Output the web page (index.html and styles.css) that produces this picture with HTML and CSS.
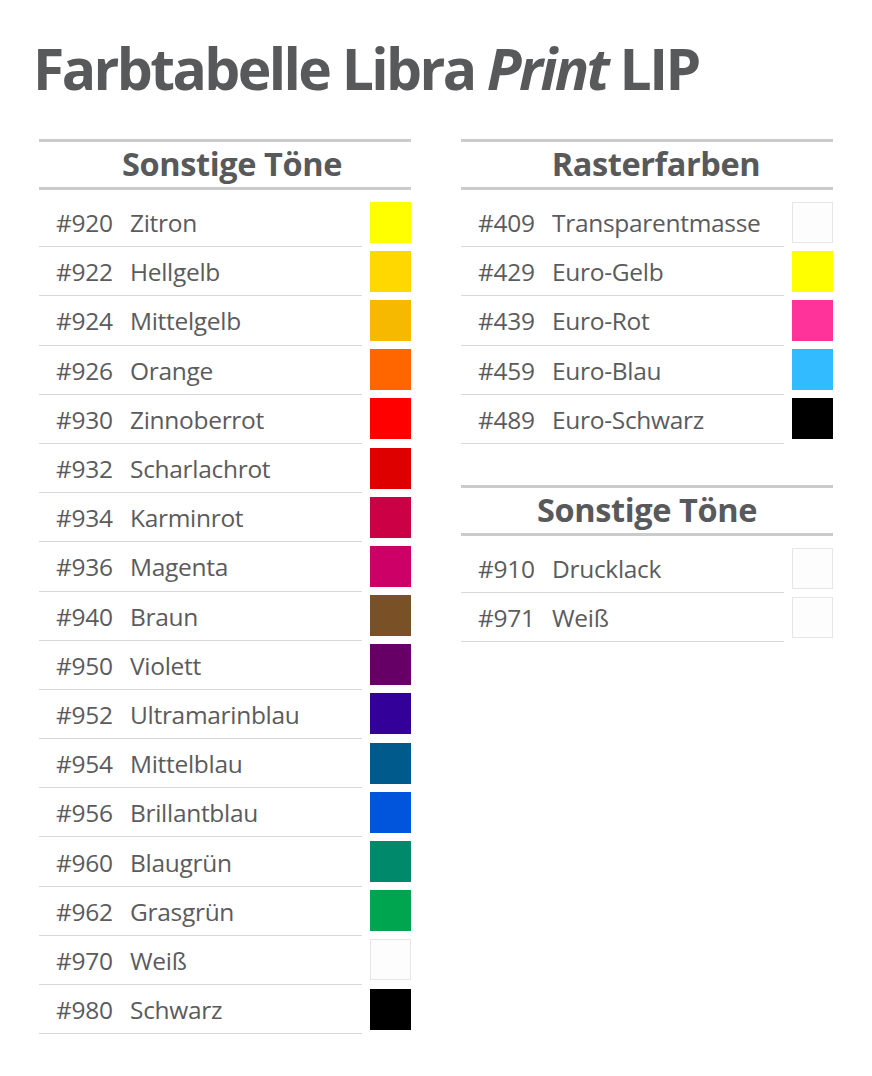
FILE: index.html
```html
<!DOCTYPE html>
<html lang="de">
<head>
<meta charset="utf-8">
<title>Farbtabelle Libra Print LIP</title>
<link rel="stylesheet" href="styles.css">
</head>
<body>
<div class="page">
  <h1 class="title">Farbtabelle Libra <em>Print</em> LIP</h1>
  <div class="columns">
    <div class="col">
      <section class="group">
        <h2 class="group-head head-shift">Sonstige Töne</h2>
        <ul class="rows">
          <li class="row"><span class="label"><span class="code">#920</span><span class="name">Zitron</span></span><span class="swatch c920"></span></li>
          <li class="row"><span class="label"><span class="code">#922</span><span class="name">Hellgelb</span></span><span class="swatch c922"></span></li>
          <li class="row"><span class="label"><span class="code">#924</span><span class="name">Mittelgelb</span></span><span class="swatch c924"></span></li>
          <li class="row"><span class="label"><span class="code">#926</span><span class="name">Orange</span></span><span class="swatch c926"></span></li>
          <li class="row"><span class="label"><span class="code">#930</span><span class="name">Zinnoberrot</span></span><span class="swatch c930"></span></li>
          <li class="row"><span class="label"><span class="code">#932</span><span class="name">Scharlachrot</span></span><span class="swatch c932"></span></li>
          <li class="row"><span class="label"><span class="code">#934</span><span class="name">Karminrot</span></span><span class="swatch c934"></span></li>
          <li class="row"><span class="label"><span class="code">#936</span><span class="name">Magenta</span></span><span class="swatch c936"></span></li>
          <li class="row"><span class="label"><span class="code">#940</span><span class="name">Braun</span></span><span class="swatch c940"></span></li>
          <li class="row"><span class="label"><span class="code">#950</span><span class="name">Violett</span></span><span class="swatch c950"></span></li>
          <li class="row"><span class="label"><span class="code">#952</span><span class="name">Ultramarinblau</span></span><span class="swatch c952"></span></li>
          <li class="row"><span class="label"><span class="code">#954</span><span class="name">Mittelblau</span></span><span class="swatch c954"></span></li>
          <li class="row"><span class="label"><span class="code">#956</span><span class="name">Brillantblau</span></span><span class="swatch c956"></span></li>
          <li class="row"><span class="label"><span class="code">#960</span><span class="name">Blaugrün</span></span><span class="swatch c960"></span></li>
          <li class="row"><span class="label"><span class="code">#962</span><span class="name">Grasgrün</span></span><span class="swatch c962"></span></li>
          <li class="row"><span class="label"><span class="code">#970</span><span class="name">Weiß</span></span><span class="swatch white"></span></li>
          <li class="row"><span class="label"><span class="code">#980</span><span class="name">Schwarz</span></span><span class="swatch black"></span></li>
        </ul>
      </section>
    </div>
    <div class="col">
      <section class="group">
        <h2 class="group-head head-shift-wide">Rasterfarben</h2>
        <ul class="rows">
          <li class="row"><span class="label"><span class="code">#409</span><span class="name">Transparentmasse</span></span><span class="swatch white"></span></li>
          <li class="row"><span class="label"><span class="code">#429</span><span class="name">Euro-Gelb</span></span><span class="swatch c429"></span></li>
          <li class="row"><span class="label"><span class="code">#439</span><span class="name">Euro-Rot</span></span><span class="swatch c439"></span></li>
          <li class="row"><span class="label"><span class="code">#459</span><span class="name">Euro-Blau</span></span><span class="swatch c459"></span></li>
          <li class="row"><span class="label"><span class="code">#489</span><span class="name">Euro-Schwarz</span></span><span class="swatch black"></span></li>
        </ul>
      </section>
      <section class="group group-second">
        <h2 class="group-head">Sonstige Töne</h2>
        <ul class="rows">
          <li class="row"><span class="label"><span class="code">#910</span><span class="name">Drucklack</span></span><span class="swatch white"></span></li>
          <li class="row"><span class="label"><span class="code">#971</span><span class="name">Weiß</span></span><span class="swatch white"></span></li>
        </ul>
      </section>
    </div>
  </div>
</div>
</body>
</html>
```
FILE: styles.css
```css
html, body {
  margin: 0;
  padding: 0;
  background: #ffffff;
}

body {
  font-family: "Open Sans", "Liberation Sans", sans-serif;
  color: #58595b;
}

.page {
  padding: 35px 0 0 33px;
}

.title {
  margin: 0;
  font-size: 57px;
  line-height: 66px;
  font-weight: 700;
  letter-spacing: -2.6px;
  color: #58595b;
}

.title em {
  font-style: italic;
}

.columns {
  display: flex;
  gap: 50px;
  margin-top: 38px;
  padding-left: 6px;
}

.col {
  width: 372px;
  display: flex;
  flex-direction: column;
}

.group-second {
  margin-top: 41px;
}

.group-head {
  margin: 0;
  border-top: 3px solid #cbcbcb;
  border-bottom: 3px solid #cbcbcb;
  height: 45px;
  box-sizing: content-box;
  font-size: 32.5px;
  line-height: 43px;
  font-weight: 700;
  letter-spacing: -0.4px;
  text-align: center;
  color: #58595b;
}

.head-shift {
  padding-left: 14px;
  width: 358px;
}

.head-shift-wide {
  padding-left: 18px;
  width: 354px;
}

.rows {
  list-style: none;
  margin: 8px 0 0;
  padding: 0;
}

.row {
  display: flex;
  align-items: center;
  gap: 8px;
  height: 49.2px;
}

.label {
  flex: 1;
  height: 100%;
  box-sizing: border-box;
  border-bottom: 1px solid #d8d8d8;
  display: flex;
  align-items: center;
  padding-left: 17px;
  padding-top: 1px;
  font-size: 24.5px;
  color: #5b5b5d;
  letter-spacing: -0.3px;
}

.code {
  width: 74px;
  flex: none;
}

.swatch {
  width: 41px;
  height: 41px;
  flex: none;
  box-sizing: border-box;
  margin-bottom: 1px;
}

.c920 { background: #ffff00; }
.c922 { background: #ffd800; }
.c924 { background: #f7b800; }
.c926 { background: #ff6600; }
.c930 { background: #ff0000; }
.c932 { background: #de0000; }
.c934 { background: #cc0044; }
.c936 { background: #cc0066; }
.c940 { background: #7a5026; }
.c950 { background: #660066; }
.c952 { background: #330099; }
.c954 { background: #005a8c; }
.c956 { background: #0055dd; }
.c960 { background: #00896a; }
.c962 { background: #00a550; }
.c429 { background: #ffff00; }
.c439 { background: #ff3399; }
.c459 { background: #33bbff; }

.white {
  background: #fdfdfd;
  border: 1px solid #e6e6e6;
}

.black { background: #000000; }
```
